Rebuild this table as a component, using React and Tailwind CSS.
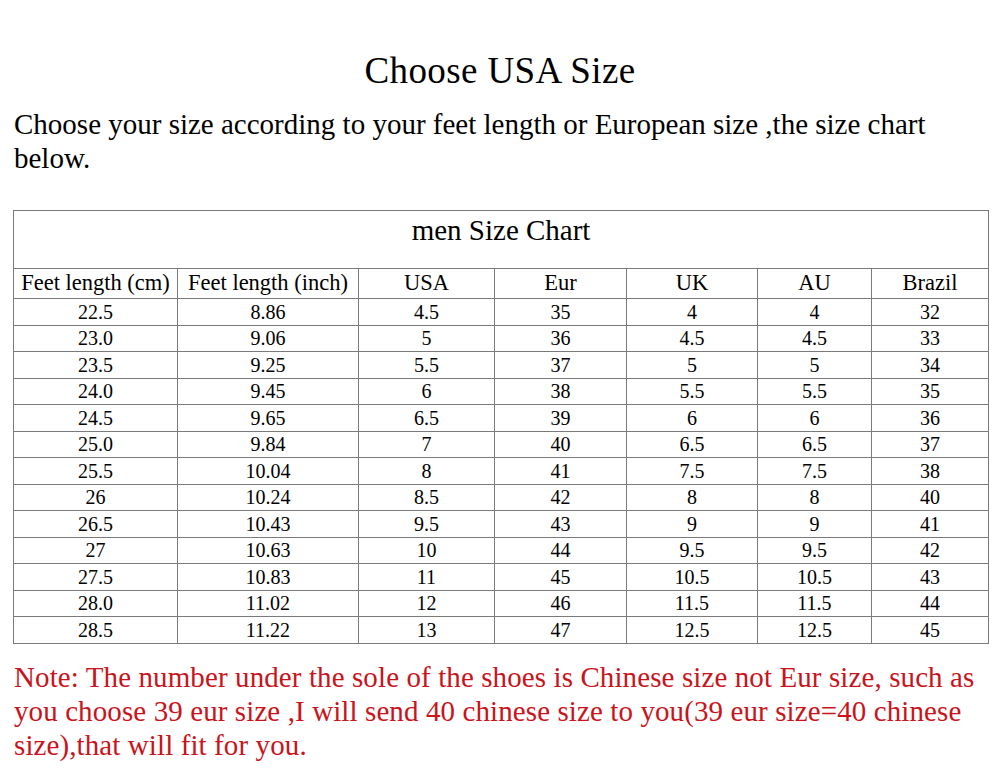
import React from "react";

const rows = [
  ["22.5", "8.86", "4.5", "35", "4", "4", "32"],
  ["23.0", "9.06", "5", "36", "4.5", "4.5", "33"],
  ["23.5", "9.25", "5.5", "37", "5", "5", "34"],
  ["24.0", "9.45", "6", "38", "5.5", "5.5", "35"],
  ["24.5", "9.65", "6.5", "39", "6", "6", "36"],
  ["25.0", "9.84", "7", "40", "6.5", "6.5", "37"],
  ["25.5", "10.04", "8", "41", "7.5", "7.5", "38"],
  ["26", "10.24", "8.5", "42", "8", "8", "40"],
  ["26.5", "10.43", "9.5", "43", "9", "9", "41"],
  ["27", "10.63", "10", "44", "9.5", "9.5", "42"],
  ["27.5", "10.83", "11", "45", "10.5", "10.5", "43"],
  ["28.0", "11.02", "12", "46", "11.5", "11.5", "44"],
  ["28.5", "11.22", "13", "47", "12.5", "12.5", "45"],
];

const heads = ["Feet length (cm)", "Feet length (inch)", "USA", "Eur", "UK", "AU", "Brazil"];
const widths = [164, 181, 136, 132, 131, 114, 117];

export default function App() {
  return (
    <div
      className="w-[1000px] h-[777px] bg-white text-black overflow-hidden"
      style={{ fontFamily: '"Liberation Serif", "Times New Roman", serif' }}
    >
      <h1 className="pt-[49px] text-center text-[37px] leading-[44px] tracking-[0.4px]">Choose USA Size</h1>
      <div className="mt-[14px] pl-[14px] text-[29px] leading-[34px] whitespace-nowrap">
        <div>Choose your size according to your feet length or European size ,the size chart</div>
        <div>below.</div>
      </div>
      <table className="mt-[35px] ml-[13px] w-[975px] table-fixed border-collapse text-[20px] leading-none">
        <colgroup>
          {widths.map((w, i) => (
            <col key={i} style={{ width: w }} />
          ))}
        </colgroup>
        <tbody>
          <tr className="h-[58px]">
            <td colSpan={7} className="border border-[#7a7a7a] text-center align-top pt-[5px] text-[29px]">
              men Size Chart
            </td>
          </tr>
          <tr className="h-[30px]">
            {heads.map((h, i) => (
              <td key={i} className="border border-[#7a7a7a] text-center whitespace-nowrap p-0 text-[22.5px]">
                {h}
              </td>
            ))}
          </tr>
          {rows.map((r, ri) => (
            <tr key={ri} className="h-[26.5px]">
              {r.map((c, ci) => (
                <td key={ci} className="border border-[#7a7a7a] text-center p-0">
                  {c}
                </td>
              ))}
            </tr>
          ))}
        </tbody>
      </table>
      <div className="mt-[16px] pl-[14px] text-[29px] leading-[34px] text-[#c9141c] whitespace-nowrap tracking-[0.1px]">
        <div>Note: The number under the sole of the shoes is Chinese size not Eur size, such as</div>
        <div>you choose 39 eur size ,I will send 40 chinese size to you(39 eur size=40 chinese</div>
        <div>size),that will fit for you.</div>
      </div>
    </div>
  );
}
